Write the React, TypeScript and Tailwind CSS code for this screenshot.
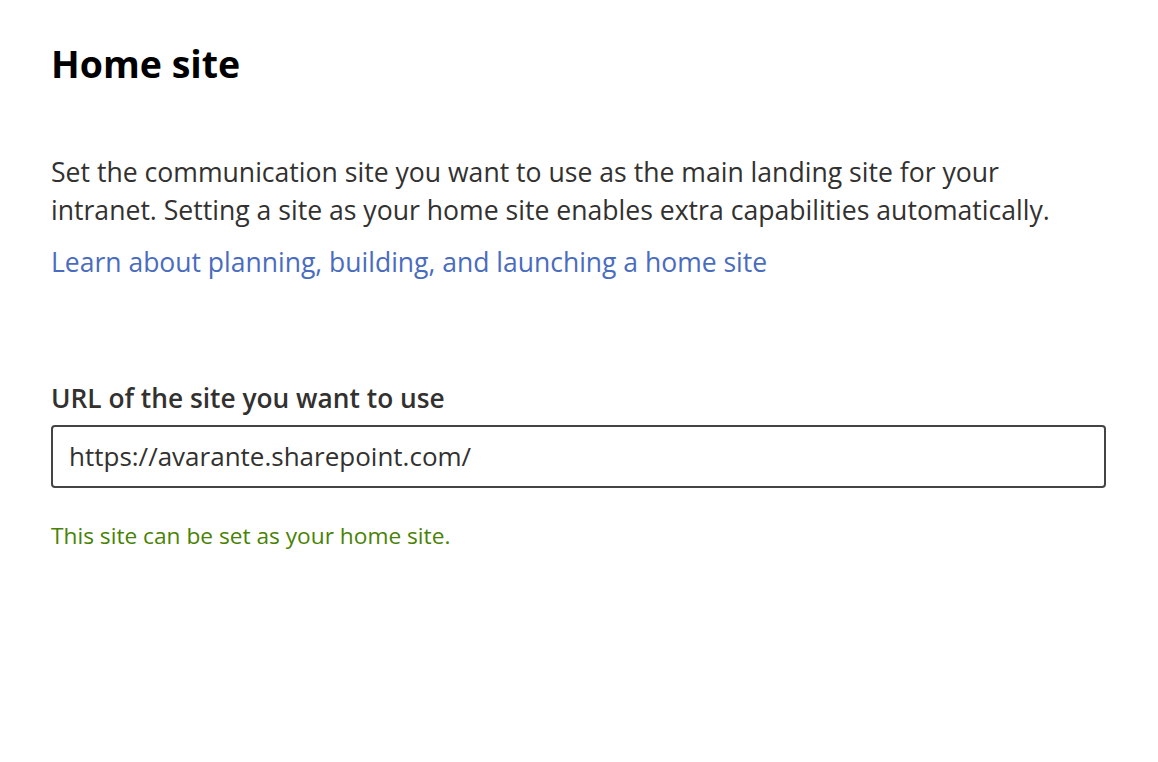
import React from 'react';

export default function App() {
  return (
    <div className="min-h-[762px] w-full bg-white px-[51px] pt-[36px] font-['Open_Sans',sans-serif] text-[#323130]">
      <h1 className="text-[37.5px] font-bold leading-[56px] text-black">Home site</h1>

      <p className="mt-[61px] max-w-[1000px] text-[26.6px] leading-[38px]">
        Set the communication site you want to use as the main landing site for your intranet. Setting a site as your home site enables extra capabilities automatically.
      </p>
      <a href="#" className="mt-[15px] block text-[26.5px] leading-[36px] text-[#4a6cbe]">
        Learn about planning, building, and launching a home site
      </a>

      <div className="mt-[100px] flex flex-col">
        <label className="text-[26.3px] font-semibold leading-[36px]">URL of the site you want to use</label>
        <div className="mt-[9px] flex h-[63px] w-[1055px] items-center rounded-[4px] border-2 border-[#444] px-[16px]">
          <span className="text-[26px]">https://avarante.sharepoint.com/</span>
        </div>
        <p className="mt-[34px] text-[22.7px] leading-[28px] text-[#498205]">This site can be set as your home site.</p>
      </div>
    </div>
  );
}
